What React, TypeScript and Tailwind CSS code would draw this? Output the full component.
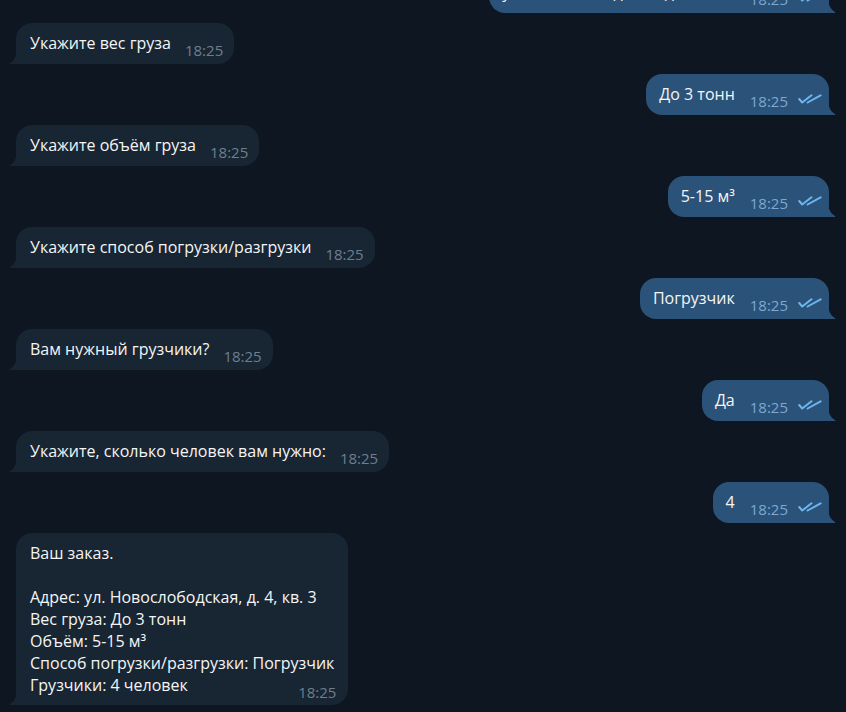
import React from 'react';

type Msg = {
    id: number;
    out: boolean;
    text: string;
};

const messages: Msg[] = [
    { id: 1, out: true, text: 'ул. Новослободская, д. 4, кв. 3' },
    { id: 2, out: false, text: 'Укажите вес груза' },
    { id: 3, out: true, text: 'До 3 тонн' },
    { id: 4, out: false, text: 'Укажите объём груза' },
    { id: 5, out: true, text: '5-15 м³' },
    { id: 6, out: false, text: 'Укажите способ погрузки/разгрузки' },
    { id: 7, out: true, text: 'Погрузчик' },
    { id: 8, out: false, text: 'Вам нужный грузчики?' },
    { id: 9, out: true, text: 'Да' },
    { id: 10, out: false, text: 'Укажите, сколько человек вам нужно:' },
    { id: 11, out: true, text: '4' },
];

const summary = [
    'Ваш заказ.',
    '',
    'Адрес: ул. Новослободская, д. 4, кв. 3',
    'Вес груза: До 3 тонн',
    'Объём: 5-15 м³',
    'Способ погрузки/разгрузки: Погрузчик',
];

function DoubleCheck() {
    return (
        <svg width="24" height="10" viewBox="0 0 24 10" fill="none" className="text-[#6cb6ee]">
            <path d="M1.2 5 L4.2 8.5 L13.5 1.3" stroke="currentColor" strokeWidth="2" strokeLinecap="round" strokeLinejoin="round" />
            <path d="M9.6 8.5 L22.6 1.3" stroke="currentColor" strokeWidth="2" strokeLinecap="round" />
        </svg>
    );
}

function TailLeft() {
    return (
        <svg width="8" height="16" viewBox="0 0 8 16" className="absolute bottom-0 -left-[7px] text-[#182533]">
            <path d="M8 0 C8 7 6 12 1 15 C0.4 15.4 0.6 16 1.3 16 H8 Z" fill="currentColor" />
        </svg>
    );
}

function TailRight() {
    return (
        <svg width="8" height="16" viewBox="0 0 8 16" className="absolute bottom-0 -right-[7px] text-[#2b5278]">
            <path d="M0 0 C0 7 2 12 7 15 C7.6 15.4 7.4 16 6.7 16 H0 Z" fill="currentColor" />
        </svg>
    );
}

function Bubble({ m, first }: { m: Msg; first?: boolean }) {
    if (m.out) {
        return (
            <div className={`flex justify-end pr-[17px] ${first ? 'mt-[-28px]' : ''}`}>
                <div className="relative bg-[#2b5278] rounded-[16px] rounded-br-none pl-[13px] pr-[7px] pt-[9px] pb-[10px] flex items-end">
                    <span className="text-[16px] leading-[22px] text-[#f5f5f5]">{m.text}</span>
                    <span className="ml-[15px] text-[15px] leading-[16px] text-[#7da8d3] translate-y-[4px]">18:25</span>
                    <span className="ml-[10px] mb-[1px]">
                        <DoubleCheck />
                    </span>
                    <TailRight />
                </div>
            </div>
        );
    }
    return (
        <div className="flex justify-start pl-[16px]">
            <div className="relative bg-[#182533] rounded-[16px] rounded-bl-none pl-[14px] pr-[11px] pt-[9px] pb-[10px] flex items-end">
                <span className="text-[16px] leading-[22px] text-[#f5f5f5]">{m.text}</span>
                <span className="ml-[14px] text-[15px] leading-[16px] text-[#6d7f8f] translate-y-[4px]">18:25</span>
                <TailLeft />
            </div>
        </div>
    );
}

export default function App() {
    return (
        <div
            className="h-[712px] w-[846px] overflow-hidden bg-[#0e1621] flex flex-col gap-[10px]"
            style={{ fontFamily: '"Open Sans", "Noto Sans", sans-serif' }}
        >
            {messages.map((m, i) => (
                <Bubble key={m.id} m={m} first={i === 0} />
            ))}

            {/* Order summary */}
            <div className="flex justify-start pl-[16px]">
                <div className="relative bg-[#182533] rounded-[16px] rounded-bl-none pl-[14px] pr-[14px] pt-[9px] pb-[9px] text-[16px] leading-[22px] text-[#f5f5f5]">
                    {summary.map((line, i) => (
                        <div key={i} className="h-[22px]">{line}</div>
                    ))}
                    <div className="flex items-end justify-between">
                        <span>Грузчики: 4 человек</span>
                        <span className="ml-[14px] text-[15px] leading-[16px] text-[#6d7f8f] translate-y-[4px] -mr-[2px]">18:25</span>
                    </div>
                    <TailLeft />
                </div>
            </div>
        </div>
    );
}
